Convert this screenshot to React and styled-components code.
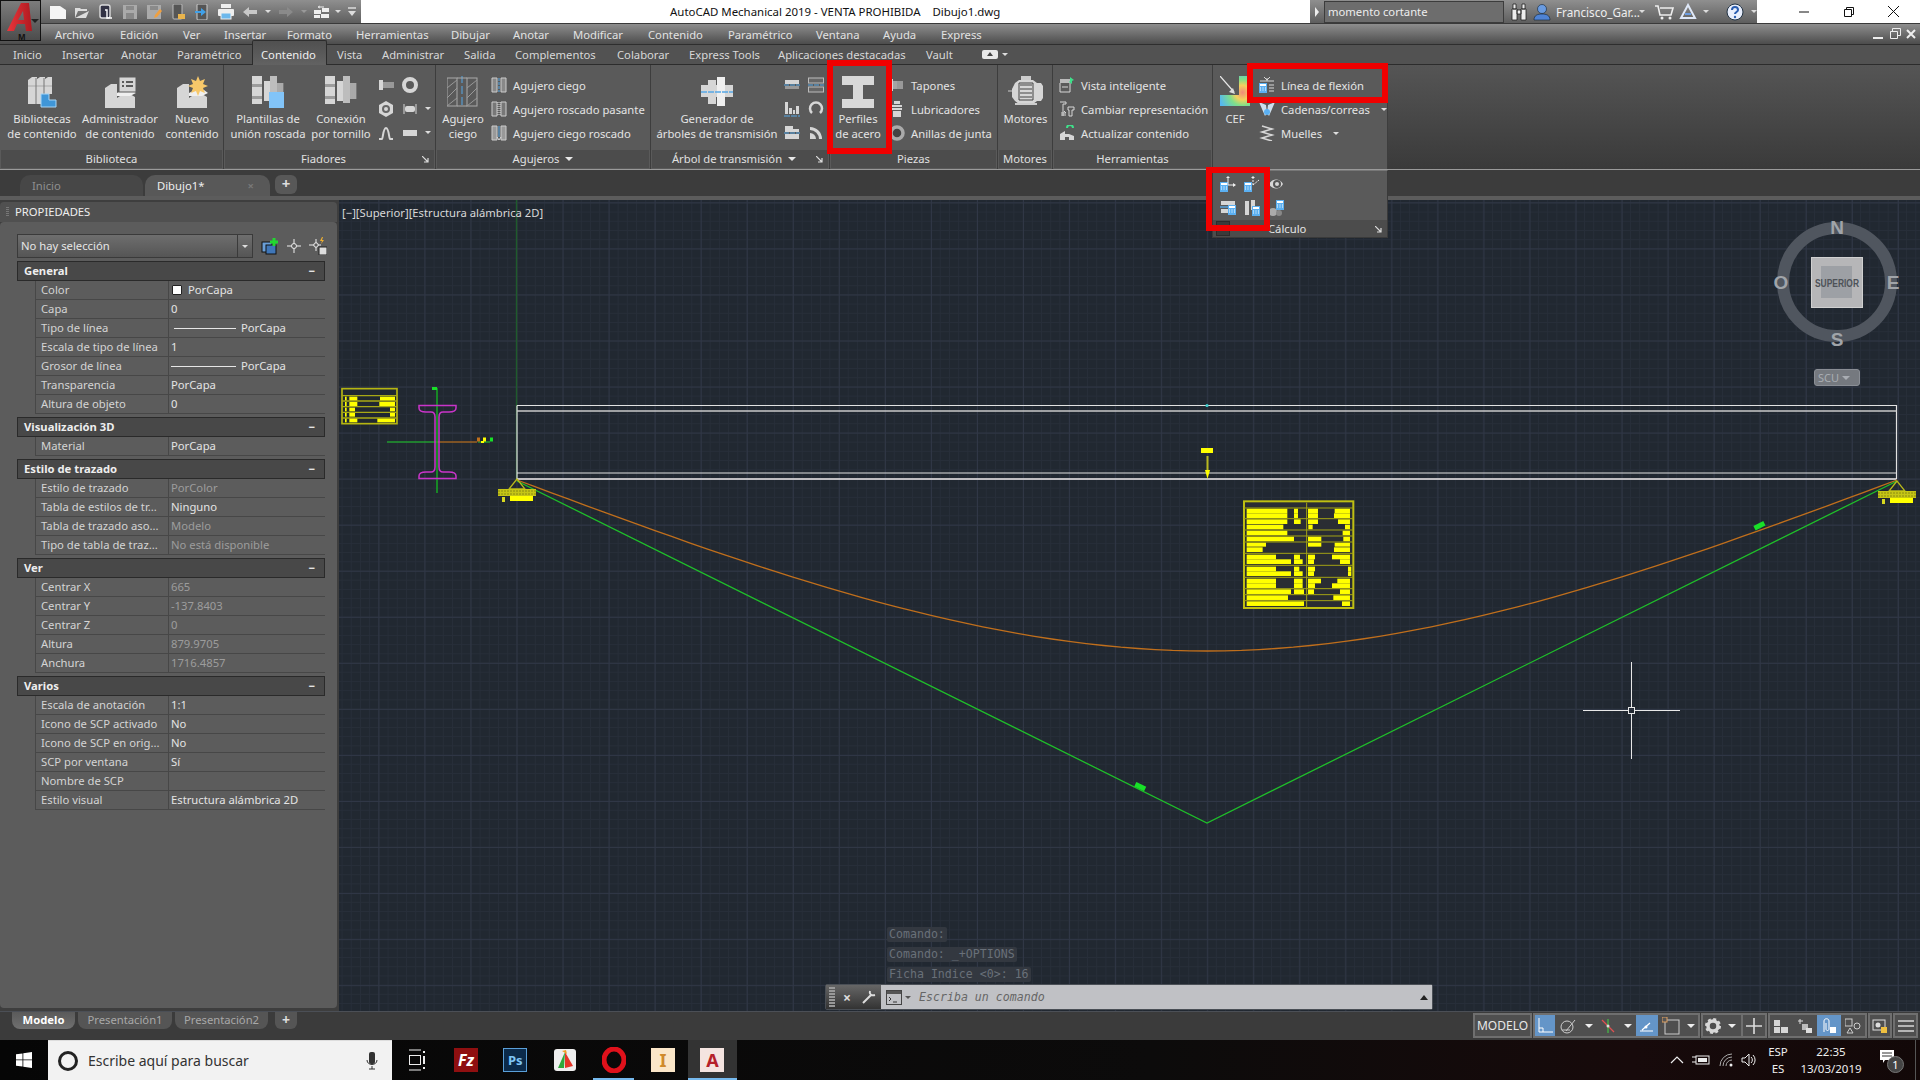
import React from 'react';
import styled, { createGlobalStyle } from 'styled-components';

const UI = '"Noto Sans", "Open Sans", sans-serif';
const MONO = '"DejaVu Sans Mono", "Liberation Mono", monospace';
const FS = '11.25px';

const Global = createGlobalStyle`
  html, body { margin: 0; padding: 0; background: #3b3b3b; }
  #root { width: 1920px; height: 1080px; }
  svg { display: block; flex-shrink: 0; }
  * { box-sizing: border-box; }
`;

const Root = styled.div`
  position: relative; width: 1920px; height: 1080px; overflow: hidden;
  display: flex; flex-direction: column; font-family: ${UI}; font-size: ${FS}; color: #dcdcdc; background: #3b3b3b;
`;

/* title bar */
const TitleBar = styled.div`display: flex; height: 24px; background: #fff; border-bottom: 1px solid #3a3a3a;`;
const Qat = styled.div`
  width: 361px; padding-left: 46px; display: flex; align-items: center; gap: 0;
  background: linear-gradient(#8f8f8f, #5e5e5e);
`;
const QatSlot = styled.div`width: ${p => p.$w || 24}px; display: flex; justify-content: center;`;
const TitleText = styled.div`
  padding-left: 309px; font-size: 11.45px; color: #111; line-height: 23px; white-space: pre;
`;
const RightTools = styled.div`
  margin-left: auto; width: 447px; display: flex; align-items: center; padding-left: 4px;
  background: linear-gradient(#8f8f8f, #5e5e5e);
`;
const SearchBox = styled.div`
  width: 180px; height: 22px; margin-left: 4px; background: #6d6d6d; border: 1px solid #3c3c3c; color: #eee;
  font-size: ${FS}; line-height: 20px; padding-left: 3px; margin-right: 6px;
`;
const ToolGap = styled.span`width: ${p => p.$w}px; flex-shrink: 0;`;
const UserName = styled.span`font-size: 11.7px; color: #eee; margin: 0 3px 0 5px; width: 80px; white-space: nowrap;`;
const Caret = styled.div`
  width: 0; height: 0; border-left: ${p => p.$s || 3}px solid transparent; border-right: ${p => p.$s || 3}px solid transparent;
  border-top: ${p => p.$s || 3}px solid ${p => p.$c || '#ddd'}; flex-shrink: 0; margin: ${p => p.$m || '0'};
`;
const WinControls = styled.div`width: 163px; display: flex; align-items: center; padding-left: 39px; gap: 29px;`;

/* app button overlay */
const AppButton = styled.div`
  position: absolute; left: 0; top: 0; width: 41px; height: 41px; z-index: 5;
  background: linear-gradient(#7c7c7c, #4c4c4c); border: 1px solid #111;
`;
const AppM = styled.span`position: absolute; left: 17px; top: 30px; font-size: 8px; font-weight: 700; color: #111;`;
const AppCaret = styled.div`position: absolute; left: 30px; top: 18px;`;
const LogoLayer = styled.div`position: absolute; left: 7px; top: 3px; z-index: 6;`;

/* menu */
const MenuBar = styled.div`
  display: flex; height: 21px; padding-left: 55px; align-items: center;
  background: linear-gradient(#8e8e8e, #4c4c4c); border-bottom: 1px solid #2e2e2e; position: relative;
`;
const MenuItem = styled.span`width: ${p => p.$w}px; font-size: ${FS}; color: #e2e2e2; white-space: nowrap;`;
const DocControls = styled.div`
  position: absolute; right: 4px; top: 4px; display: flex; gap: 5px; align-items: center;
`;

/* ribbon tabs */
const TabRow = styled.div`
  display: flex; height: 20px; padding-left: 13px; background: #525252; border-bottom: 1px solid #2c2c2c;
  isolation: isolate; align-items: center;
`;
const RibbonTab = styled.span`
  width: ${p => p.$w}px; font-size: ${FS}; color: ${p => (p.$active ? '#f0f0f0' : '#d8d8d8')}; white-space: nowrap; position: relative;
  ${p => p.$active && `
    &::before { content: ''; position: absolute; left: -9px; width: 73px; top: -7px; bottom: -3px; z-index: -1;
      background: linear-gradient(#505050, #626262); border: 1px solid #2c2c2c; border-bottom: none; border-radius: 2px 2px 0 0; }
  `}
`;
const TabPill = styled.span`
  width: 16px; height: 9px; border-radius: 2px; background: #e8e8e8; position: relative; margin-right: 4px;
  &::after { content: ''; position: absolute; left: 5px; top: 2px; border-left: 3px solid transparent; border-right: 3px solid transparent; border-bottom: 4px solid #444; }
`;

/* ribbon */
const Ribbon = styled.div`
  display: flex; height: 105px; background: linear-gradient(#555, #3a3a3a); border-bottom: 1px solid #9a9a9a; position: relative;
`;
const Panel = styled.div`
  width: ${p => p.$w}px; flex-shrink: 0; display: flex; flex-direction: column; background: #5a5a5a;
  border-right: 1px solid #3d3d3d; position: relative;
`;
const PanelBody = styled.div`flex: 1; display: flex; min-height: 0; padding-left: ${p => p.$pl || 0}px;`;
const PanelLabel = styled.div`
  height: 18px; background: #4c4c4c; color: #e0e0e0; font-size: ${FS}; display: flex; align-items: center; justify-content: center;
  gap: 6px; line-height: 16px; position: relative; margin: 0 1px 1px; padding-right: ${p => p.$pr || 0}px;
`;
const Launcher = styled.span`position: absolute; right: 5px; top: 6px;`;
const LargeBtn = styled.div`
  width: ${p => p.$w}px; flex-shrink: 0; display: flex; flex-direction: column; align-items: center; padding-top: 11px;
`;
const LargeText = styled.div`
  font-size: ${FS}; line-height: 15px; text-align: center; white-space: nowrap; margin-top: 3px; color: #e4e4e4;
`;
const SmallGrid = styled.div`
  display: grid; grid-template-columns: repeat(2, 24px); grid-auto-rows: 24px; padding-top: 8px; margin-left: ${p => p.$ml || 0}px;
  place-items: center; align-content: start;
`;
const SmallCell = styled.div`display: flex; align-items: center; position: relative;`;
const CellCaret = styled.div`position: absolute; left: 23px; top: 6px;`;
const SmallList = styled.div`display: flex; flex-direction: column; padding-top: 8px; padding-left: ${p => p.$pl || 0}px;`;
const SmallRow = styled.div`
  height: 24px; display: flex; align-items: center; gap: 6px; white-space: nowrap; font-size: ${FS}; color: #e4e4e4;
`;
const Flyout = styled.div`
  position: absolute; left: -1px; right: -1px; top: 105px; height: 68px; z-index: 3;
  background: #5a5a5a; border: 1px solid #3a3a3a; border-top: 1px solid #777; display: flex; flex-direction: column;
`;
const FlyoutRows = styled.div`flex: 1; display: grid; grid-template-columns: repeat(3, 24px); grid-auto-rows: 24px; padding: 1px 0 0 2px; place-items: center; align-content: start; margin-left: 1px;`;
const FlyoutLabel = styled.div`
  height: 18px; background: #4c4c4c; position: relative; padding-left: 55px; font-size: ${FS}; line-height: 17px; color: #e4e4e4;
`;
const PinBtn = styled.span`position: absolute; left: 3px; top: 1px; width: 14px; height: 15px; border: 1px solid #2c2c2c; background: #3a3a3a;`;
const RedBox = styled.div`
  position: absolute; z-index: 8; left: ${p => p.$x}px; top: ${p => p.$y}px; width: ${p => p.$w}px; height: ${p => p.$h}px;
  border: 6px solid #f00000;
`;

/* file tabs */
const FileTabs = styled.div`
  height: 30px; display: flex; align-items: flex-start; padding: 5px 0 0 20px; background: #3c3c3c; border-bottom: 4px solid #5c5c5c; gap: 2px;
`;
const FileTab = styled.div`
  width: ${p => p.$w}px; height: 21px; border-radius: 10px 10px 0 0; font-size: ${FS}; line-height: 21px; display: flex; justify-content: space-between;
  padding: 0 12px 0 12px; color: ${p => (p.$active ? '#eee' : '#8f8f8f')}; background: ${p => (p.$active ? '#585858' : '#474747')};
`;
const FileClose = styled.span`color: #777; font-weight: 700; margin-right: 4px;`;
const PlusTab = styled.div`
  width: 22px; height: 19px; margin-left: ${p => p.$ml || 3}px; border-radius: 6px; background: #585858; color: #ddd; text-align: center; font-size: 15px; line-height: 17px; font-weight: 700;
`;

/* main */
const Main = styled.div`flex: 1; display: flex; min-height: 0;`;
const Side = styled.div`width: 339px; flex-shrink: 0; padding: 2px 2px 3px 0; background: #3e3e3e; display: flex; flex-direction: column;`;
const SideHeader = styled.div`
  height: 20px; background: #505050; border-radius: 4px 4px 0 0; padding-left: 15px; font-size: ${FS}; line-height: 19px; color: #eee; position: relative;
  &::before { content: ''; position: absolute; left: 6px; top: 5px; width: 3px; height: 10px; background: repeating-linear-gradient(#777 0 1px, transparent 1px 2px); }
`;
const SideBody = styled.div`flex: 1; background: #5c5c5c; border-radius: 4px; padding: 12px 12px 0 17px;`;
const SelectRow = styled.div`display: flex; align-items: center; margin-bottom: 3px; height: 24px;`;
const Select = styled.div`
  width: 236px; height: 24px; border: 1px solid #3a3a3a; background: linear-gradient(#6e6e6e, #555); padding-left: 3px;
  font-size: ${FS}; line-height: 21px; color: #e6e6e6; position: relative; flex-shrink: 0;
  &::after { content: ''; position: absolute; right: 0; top: 0; bottom: 0; width: 14px; border-left: 1px solid #3a3a3a; }
`;
const SelectCaret = styled.span`position: absolute; right: 4px; top: 10px; z-index: 1;`;
const SelectIcons = styled.div`display: flex; align-items: center; gap: 7px; margin-left: 8px;`;
const Section = styled.div`margin-bottom: 3px;`;
const SectionHead = styled.div`
  height: 20px; background: #484848; border: 1px solid #2a2a2a; display: flex; justify-content: space-between; padding: 0 9px 0 6px;
  font-weight: 700; font-size: ${FS}; line-height: 18px; color: #eee;
`;
const Row = styled.div`
  margin-left: 18px; height: 19px; display: grid; grid-template-columns: 132px 1fr; border-bottom: 1px solid #474747; border-left: 1px solid #474747;
  white-space: nowrap; line-height: 18px;
`;
const RowLabel = styled.span`padding-left: 5px; color: #d4d4d4; font-size: ${FS}; overflow: hidden;`;
const RowValue = styled.span`
  padding-left: 2px; border-left: 1px solid #474747; display: flex; align-items: center; gap: ${p => p.$gap || 0}px;
  color: ${p => (p.$dim ? '#9c9c9c' : '#e4e4e4')}; font-size: ${FS};
`;
const Swatch = styled.span`width: 10px; height: 10px; background: #fff; border: 1px solid #222; margin-left: 1px; border-radius: 1px;`;
const LineSample = styled.span`width: ${p => p.$w}px; margin-left: ${p => p.$ml}px; height: 1px; background: #e6e6e6;`;

/* canvas */
const Canvas = styled.div`
  flex: 1; position: relative; overflow: hidden; background-color: #212831;
  background-image:
    linear-gradient(90deg, #303746 1px, transparent 1px),
    linear-gradient(#303746 1px, transparent 1px),
    linear-gradient(90deg, #272e39 1px, transparent 1px),
    linear-gradient(#272e39 1px, transparent 1px);
  background-size: 46.05px 46.05px, 46.05px 46.05px, 9.21px 9.21px, 9.21px 9.21px;
  background-position: 39.4px 0, 0 2.4px, 39.4px 0, 0 2.4px;
`;
const Drawing = styled.svg`position: absolute; left: 0; top: 0;`;
const ViewLabel = styled.div`position: absolute; left: 3px; top: 5px; font-size: ${FS}; color: #d8d8d8; white-space: nowrap;`;
const CubeWrap = styled.div`position: absolute; left: 1434px; top: 12px;`;
const ScuTag = styled.div`
  position: absolute; left: 1475px; top: 169px; width: 46px; height: 17px; background: #75797f; border-radius: 3px; border: 1px solid #8a8e95; color: #a9adb3;
  font-size: 11px; line-height: 14px; padding-left: 3px; display: flex; align-items: center; gap: 3px;
`;
const History = styled.div`position: absolute; left: 548px; top: 727px; display: flex; flex-direction: column; gap: 5px; align-items: flex-start;`;
const HistoryLine = styled.div`
  background: #333840; border-radius: 2px; padding: 0 2px; height: 15px; line-height: 15px; font-family: ${MONO}; font-size: 11.6px; color: #697079; white-space: pre;
`;
const CmdBar = styled.div`
  position: absolute; left: 486px; top: 784px; width: 608px; height: 26px; display: flex; border: 1px solid #4a4f56; border-radius: 2px;
`;
const CmdHandle = styled.div`
  width: 55px; background: linear-gradient(#666, #333); display: flex; align-items: center; gap: 8px; padding-left: 3px;
`;
const CmdGrip = styled.span`width: 6px; height: 20px; background: repeating-linear-gradient(#999 0 2px, transparent 2px 3px);`;
const CmdX = styled.span`color: #ddd; font-weight: 700; font-size: 14px; width: 11px;`;
const CmdInput = styled.div`
  flex: 1; background: #c0c1c5; display: flex; align-items: center; padding-left: 5px; position: relative;
`;
const CmdText = styled.span`font-family: ${MONO}; font-style: italic; font-size: 11.6px; color: #666; margin-left: 8px;`;
const CmdUp = styled.span`
  position: absolute; right: 4px; top: 10px; border-left: 4px solid transparent; border-right: 4px solid transparent; border-bottom: 5px solid #222;
`;

/* layout tabs + status */
const LayoutBar = styled.div`height: 29px; display: flex; background: #3b3b3b; border-top: 1px solid #4b4f56; padding-left: 12px;`;
const LayoutTab = styled.div`
  width: ${p => p.$w}px; height: 17px; margin-right: 3px; text-align: center; border-radius: 0 0 8px 8px; line-height: 15px; font-size: ${FS};
  color: ${p => (p.$active ? '#fff' : '#a8a8a8')}; font-weight: ${p => (p.$active ? 700 : 400)};
  background: ${p => (p.$active ? 'linear-gradient(#5a5a5a, #707070)' : '#555')};
`;
const LayoutPlus = styled.div`
  width: 22px; height: 17px; margin-left: 4px; border-radius: 0 0 6px 6px; background: #555; color: #ddd; text-align: center; font-weight: 700; font-size: 14px; line-height: 16px;
`;
const Status = styled.div`margin-left: auto; display: flex; gap: 1px; height: 25px; margin-top: 1px; margin-right: 2px;`;
const StatusGroup = styled.div`
  display: flex; align-items: center; background: #4f4f4f; border: 2px solid #6f6f6f; width: ${p => p.$w}px; flex-shrink: 0;
`;
const StatusCell = styled.div`
  width: ${p => p.$w}px; height: 100%; display: flex; align-items: center; justify-content: center; flex-shrink: 0; background: ${p => (p.$on ? '#6495c8' : 'transparent')};
  color: #e8e8e8; font-size: 12px; border-right: ${p => (p.$sep ? '2px solid #6f6f6f' : 'none')};
`;

/* taskbar */
const Taskbar = styled.div`
  height: 40px; display: flex; background: linear-gradient(90deg, #060606 0, #0c0b0b 60%, #170a0b 85%, #120808 100%); flex-shrink: 0;
`;
const StartBtn = styled.div`width: 48px; display: flex; align-items: center; justify-content: center;`;
const TaskSearch = styled.div`
  width: 344px; background: #f2f2f2; display: flex; align-items: center; padding-left: 10px; color: #333; font-size: 14px; gap: 10px; border-top: 1px solid #ddd;
`;
const CortanaRing = styled.span`width: 20px; height: 20px; border-radius: 50%; border: 3px solid #222; background: #f2f2f2;`;
const SearchText = styled.span`flex: 1; white-space: nowrap;`;
const MicWrap = styled.span`margin-right: 14px;`;
const TaskSlot = styled.div`
  width: 49.3px; display: flex; align-items: center; justify-content: center; position: relative;
  background: ${p => (p.$active ? '#333' : 'transparent')};
  ${p => p.$running && `&::after { content: ''; position: absolute; left: ${p.$active ? 0 : 4}px; right: ${p.$active ? 0 : 4}px; bottom: 0; height: 2px; background: #76b9ed; }`}
`;
const Tile = styled.div`
  width: ${p => p.$w || 24}px; height: 24px; display: flex; align-items: center; justify-content: center; background: ${p => p.$bg};
  border: ${p => p.$bd || 'none'}; color: ${p => p.$c}; font: ${p => p.$f || `italic 700 16px/20px ${UI}`};
`;
const Tray = styled.div`margin-left: auto; display: flex; align-items: center; color: #eee; font-size: 11.5px;`;
const TrayIcons = styled.div`display: flex; align-items: center; gap: 8.5px; margin-right: 9px;`;
const TrayLang = styled.div`text-align: center; line-height: 17px; margin-right: 10px; width: 24px;`;
const TrayClock = styled.div`text-align: center; line-height: 17px; width: 62px; margin-right: 17px;`;
const TrayNote = styled.div`position: relative; margin-right: 12px; width: 24px; height: 24px;`;
const NoteBadge = styled.span`
  position: absolute; left: 8px; top: 8px; width: 17px; height: 17px; border-radius: 50%; background: #444; border: 1px solid #777; font-size: 11px; text-align: center; line-height: 15px; color: #fff;
`;
const TrayEdge = styled.div`width: 1px; height: 40px; background: #555; margin-right: 4px;`;

/* ---------- drawings ---------- */
const G = '#d6d6d6';
const Svg = ({ s = 16, w, h, children }) => (
  <svg width={w || s} height={h || s} viewBox={`0 0 ${w || s} ${h || s}`}>{children}</svg>
);
const Bolt = ({ blue }) => (
  <Svg w={34} h={32}>
    <rect x="1" y="0" width="10" height="28" fill={G} />
    <rect x="1" y="8" width="10" height="3" fill="#9c9c9c" /><rect x="1" y="20" width="10" height="3" fill="#9c9c9c" />
    <rect x="13" y="5" width="6" height="20" fill={G} />
    <rect x="19" y="0" width="7" height="27" fill={G} opacity=".8" />
    <rect x="26" y="7" width="7" height="16" fill="#777" />
    <path d="M27 7v16M29 7v16M31 7v16" stroke="#ddd" />
    {blue && <rect x="18" y="16" width="15" height="16" fill="#82c4f8" />}
  </Svg>
);
const Books = () => (
  <Svg s={32}>
    <path d="M2 4l4-3h5v27H2z M11 3l3-2h5v27h-8z M19 3l3-2h4v17h-7v10h0z" fill={G} />
    <path d="M2 10h24" stroke="#a8a8a8" /><path d="M10 2v26M18 2v26" stroke="#777" />
    <path d="M15 18h8v6h7v7H15z" fill="#3f96d8" stroke="#a7d4f5" />
  </Svg>
);
const Block = () => <path d="M1 12l6-4h6v14l6-4h7l5 3v13H1z" fill={G} />;
const AdminIc = () => (
  <Svg s={32}>
    <Block />
    <path d="M13 17l6-3h9l4 3-6 3H13z" fill="#efefef" />
    <rect x="15" y="1" width="17" height="15" fill={G} stroke="#5a5a5a" />
    <path d="M18 6h2M22 6h7M18 10h2M22 10h7" stroke="#333" strokeWidth="1.5" />
  </Svg>
);
const NewIc = () => (
  <Svg s={32}>
    <Block />
    <path d="M13 17l6-3h9l4 3-6 3H13z" fill="#efefef" />
    <path d="M22 0l2 5 5-2-2 5 5 2-5 2 2 5-5-2-2 5-2-5-5 2 2-5-5-2 5-2-2-5 5 2z" fill="#f7c86a" />
  </Svg>
);
const Hole = () => (
  <Svg s={32}>
    <rect x="0" y="2" width="10" height="28" fill="#5a5a5a" stroke="#aaa" />
    <rect x="20" y="2" width="10" height="28" fill="#5a5a5a" stroke="#aaa" />
    <path d="M0 12L10 4M0 22L10 12M0 30L10 22M20 12L30 4M20 22L30 12M20 30L30 22" stroke="#999" />
    <path d="M15 -1v34" stroke="#57a8e6" strokeDasharray="8 3" />
    <path d="M10 2h10M10 30h10" stroke="#aaa" />
  </Svg>
);
const Shaft = () => (
  <Svg s={32}>
    <rect x="0" y="9" width="32" height="12" fill={G} />
    <rect x="7" y="4" width="8" height="24" fill={G} />
    <rect x="16" y="1" width="8" height="29" fill="#efefef" />
    <path d="M0 16h32" stroke="#57a8e6" strokeWidth="1.5" strokeDasharray="6 1" />
  </Svg>
);
const IBeam = () => (
  <Svg w={34} h={32}>
    <path d="M1 0h32v9H22v14h11v9H1v-9h11V9H1z" fill="#d8d8d8" />
  </Svg>
);
const Motor = () => (
  <Svg w={36} h={32}>
    <path d="M0 15h4" stroke="#ccc" />
    <rect x="13" y="0" width="10" height="4" fill="#ccc" />
    <path d="M7 7l4-3h14l4 3h4l2 3v12l-2 3h-4l-4 3H11l-4-3-3-4v-8z" fill={G} />
    <path d="M12 9h12M12 13h12M12 17h12M12 21h12M11 7v17h14V7z" stroke="#444" fill="none" />
    <path d="M7 28h22" stroke="#ccc" strokeWidth="2" />
  </Svg>
);
const Cef = () => (
  <Svg w={30} h={32}>
    <defs>
      <radialGradient id="cefg" cx="0.75" cy="0.55" r="0.8">
        <stop offset="0" stopColor="#f08a7a" /><stop offset=".3" stopColor="#f4d05e" /><stop offset=".55" stopColor="#7fdf8a" /><stop offset="1" stopColor="#55b8f0" />
      </radialGradient>
    </defs>
    <path d="M19 0h11v30H0V19h19z" fill="url(#cefg)" />
    <path d="M0 0l14 16" stroke="#e8e8e8" strokeWidth="1.2" /><path d="M15 18l-6-2 4-4z" fill="#ddd" />
  </Svg>
);
const Calc = ({ x = 0, y = 0 }) => (
  <g transform={`translate(${x},${y})`}>
    <rect width="8" height="10" fill="#5bb0f2" /><rect x="1" y="1" width="6" height="2" fill="#fff" />
    <path d="M1 5h1M3.5 5h1M6 5h1M1 7h1M3.5 7h1M6 7h1" stroke="#fff" />
  </g>
);
const Ic = {
  bar: <Svg><rect x="1" y="3" width="14" height="4" fill={G} /><rect x="1" y="9" width="14" height="3" fill="#999" /><path d="M0 8h16" stroke="#57a8e6" strokeDasharray="5 1" /></Svg>,
  hatch: <Svg><rect x=".5" y="1" width="15" height="5" fill="#666" stroke="#bbb" /><rect x=".5" y="10" width="15" height="5" fill="#666" stroke="#bbb" /><path d="M0 8h16" stroke="#57a8e6" strokeDasharray="5 1" /></Svg>,
  chart: <Svg><path d="M1 1h3v12H1zM5 7h3v6H5zM9 9h2v4H9zM12 5h3v8h-3z" fill={G} /><path d="M0 15h16" stroke="#57a8e6" strokeWidth="1.2" strokeDasharray="6 1" /></Svg>,
  ring: <Svg><path d="M4 12a6 6 0 1 1 8 0" fill="none" stroke={G} strokeWidth="2.5" /></Svg>,
  stair: <Svg><path d="M1 1h8v3h6v3H1zM1 9h14v5H1z" fill={G} /><path d="M0 8h16" stroke="#57a8e6" strokeDasharray="5 1" /></Svg>,
  seal: <Svg><path d="M2 2a12 12 0 0 1 12 12h-3a9 9 0 0 0-9-9zM2 8a6 6 0 0 1 6 6H2z" fill={G} /></Svg>,
  screw: <Svg><rect x="1" y="3" width="4" height="10" fill={G} /><rect x="5" y="5" width="3" height="6" fill="#999" /><path d="M9 5v6M11 5v6M13 5v6M15 5v6" stroke={G} /></Svg>,
  washer: <Svg><circle cx="8" cy="8" r="6" fill="none" stroke={G} strokeWidth="4" /></Svg>,
  nut: <Svg><path d="M8 0l7 4v8l-7 4-7-4V4z" fill={G} /><circle cx="8" cy="8" r="3" fill="none" stroke="#666" strokeWidth="2" /></Svg>,
  rod: <Svg><rect x="3" y="5" width="10" height="6" fill={G} rx="2" /><path d="M2 3v10M14 3v10" stroke={G} /></Svg>,
  spring: <Svg><path d="M1 14h3c1 0 1-11 4-11s3 11 4 11h3" stroke={G} strokeWidth="2" fill="none" /></Svg>,
  flat: <Svg><rect x="1" y="5" width="14" height="6" fill={G} /></Svg>,
  holeA: <Svg><path d="M1 1h5v14H1zM10 1h5v14h-5z" fill="#888" stroke="#ccc" /><path d="M8 1v14" stroke="#57a8e6" strokeDasharray="3 1" /></Svg>,
  holeB: <Svg><path d="M1 1h5v14H1zM10 1h5v14h-5z" fill="#777" stroke="#ccc" /><path d="M7 1v14M9 1v14" stroke="#ddd" strokeDasharray="1 1" /></Svg>,
  holeC: <Svg><path d="M1 1h5v14H1zM10 1h5v14h-5z" fill="#999" stroke="#ccc" /><path d="M8 1v11" stroke="#57a8e6" /><path d="M6 12l2 3 2-3" fill="none" stroke="#ddd" /></Svg>,
  plug: <Svg><rect x="0" y="2" width="4" height="12" fill={G} /><rect x="4" y="4" width="4" height="8" fill={G} opacity=".6" /><path d="M9 4v8M11 4v8M13 4v8" stroke={G} /></Svg>,
  grease: <Svg><path d="M5 0h6v3H5zM3 4h10v2H3zM3 7h10v2H3zM4 10h8v6H4z" fill={G} /></Svg>,
  gasket: <Svg><circle cx="8" cy="8" r="6" fill="#444" stroke="#aaa" strokeWidth="3.5" /></Svg>,
  smart: <Svg><rect x="1" y="2" width="10" height="4" fill="#bbb" /><path d="M1 6v9M11 6v9M1 15h10M3 10h6" stroke={G} fill="none" /><path d="M11 0l4 3-2 1v3l-3-2 1-1z" fill="#3fe08a" /></Svg>,
  change: <Svg><path d="M1 1h6v2H4v12M9 6h6v3h-2v6h-3V9H9z" stroke={G} fill="none" /><path d="M2 12h5l-2-2M7 14H2" stroke={G} fill="none" /></Svg>,
  refresh: <Svg><path d="M1 15V9l5-3v3h4l5 2v4H10v-3H6v3z" fill={G} /><path d="M8 3a3 3 0 0 1 6 0" stroke="#3fe08a" strokeWidth="2" fill="none" /></Svg>,
  flex: <Svg><path d="M1 4h14M8 1v3M5 0l3 3 3-3" stroke={G} fill="none" /><Calc y="6" /><path d="M10 8h5M10 11h5M10 14h5" stroke={G} /></Svg>,
  chain: <Svg><path d="M0 1l7 3 1 8-2 3zM16 1l-7 3-1 8 2 3z" fill="#cfe0ee" /><circle cx="8" cy="11" r="3" fill="#5bb0f2" /></Svg>,
  coil: <Svg><path d="M3 1l10 3-10 3 10 3-10 3 10 3" stroke={G} strokeWidth="1.6" fill="none" /></Svg>,
  axisA: <Svg><Calc y="6" /><path d="M8 9V1M8 9h7" stroke="#eee" /><path d="M6 2l2-2 2 2M13 7l3 2-3 2" fill="#eee" /></Svg>,
  axisB: <Svg><Calc y="6" /><path d="M9 9V1M9 9l6-5" stroke="#eee" strokeDasharray="2 1" /><path d="M7 2l2-2 2 2" fill="#eee" /></Svg>,
  calcA: <Svg><rect x="1" y="1" width="14" height="4" fill={G} /><rect x="1" y="9" width="7" height="4" fill={G} /><path d="M0 7h9" stroke="#57a8e6" strokeWidth="1.4" /><Calc x="8" y="5" /></Svg>,
  calcB: <Svg><rect x="1" y="1" width="4" height="14" fill={G} /><rect x="7" y="0" width="4" height="10" fill={G} /><Calc x="8" y="6" /></Svg>,
  eye: <Svg><path d="M1 8c3-6 11-6 14 0-3 6-11 6-14 0z" fill={G} /><circle cx="9" cy="8" r="4" fill="#555" /><circle cx="9" cy="8" r="2" fill={G} /></Svg>,
  gears: <Svg><circle cx="5" cy="12" r="4" fill="#aaa" /><circle cx="11" cy="13" r="3" fill="#888" /><Calc x="8" y="0" /></Svg>,
};
const Launch = () => <Svg s={7}><path d="M0 0l6 6M6 2v4H2" stroke="#ddd" fill="none" strokeWidth="1.2" /></Svg>;
const PanelCaret = () => <Caret $s={4} $c="#e8e8e8" />;

const Qi = {
  page: <Svg><path d="M0 2h10l6 4v9H0z" fill="#f5f5f5" /></Svg>,
  open: <Svg><path d="M1 14V4h5l1 1h6v2H4l-3 7h11l3-7" fill="#ddd" /></Svg>,
  sheet: <Svg><rect x="2" y="1" width="10" height="13" rx="2" fill="#334" stroke="#ddd" strokeWidth="1.4" /><path d="M7 6h2v8h5" stroke="#fff" fill="none" strokeWidth="1.4" /></Svg>,
  save: <Svg><path d="M1 1h14v14H1z" fill="#aaa" /><rect x="4" y="2" width="8" height="4" fill="#8a8a8a" /><rect x="4" y="9" width="8" height="6" fill="#888" /></Svg>,
  saveAs: <Svg><path d="M1 1h14v14H1z" fill="#aaa" /><rect x="4" y="2" width="8" height="4" fill="#8a8a8a" /><path d="M8 14l1-3 5-6 2 2-5 6z" fill="#f0a040" /></Svg>,
  phone: <Svg><rect x="3" y="0" width="9" height="15" rx="1" fill="#555" stroke="#bbb" /><path d="M8 10h7v5H8z" fill="#e9b44c" /></Svg>,
  phone2: <Svg><rect x="3" y="0" width="10" height="16" rx="1" fill="#555" stroke="#ccc" /><path d="M1 7h6V4l5 4-5 4V9H1z" fill="#3fa0e8" /></Svg>,
  print: <Svg><rect x="3" y="0" width="10" height="4" fill="#eee" /><rect x="0" y="5" width="16" height="7" fill="#eee" rx="1" /><rect x="3" y="9" width="10" height="6" fill="#6db8ec" stroke="#eee" /></Svg>,
  undo: <Svg><path d="M1 8l6-5v3h8v4H7v3z" fill="#c8c8c8" /></Svg>,
  redo: <Svg><path d="M15 8L9 3v3H1v4h8v3z" fill="#8a8a8a" /></Svg>,
  ws: <Svg><rect x="0" y="6" width="7" height="4" fill="#eee" /><rect x="7" y="10" width="8" height="4" fill="#eee" /><rect x="0" y="11" width="6" height="3" fill="#eee" /><rect x="8" y="4" width="7" height="4" fill="#eee" /><path d="M6 3h4M6 2l-2 1 2 1" stroke="#eee" fill="none" /></Svg>,
  more: <Svg w={10} h={12}><path d="M1 2h8" stroke="#ddd" strokeWidth="1.5" /><path d="M1 5h8L5 10z" fill="#ddd" /></Svg>,
};

const AppLogo = () => (
  <Svg w={26} h={28}>
    <defs><linearGradient id="apa" x1="0" x2="1"><stop offset="0" stopColor="#ea363c" /><stop offset="1" stopColor="#b01a20" /></linearGradient></defs>
    <path d="M0 28L14 0h8l3 28h-6l-1-7h-8l-3 7zM11 17h6l-1-9z" fill="url(#apa)" fillRule="evenodd" />
  </Svg>
);

/* the CAD drawing, in screen coordinates */
const deflect = () => {
  const pts = [];
  for (let i = 0; i <= 80; i++) {
    const t = i / 80;
    const x = 517 + t * 1380;
    const xi = t <= 0.5 ? t : 1 - t;
    pts.push(`${x.toFixed(1)},${(480 + 171 * xi * (3 - 4 * xi * xi)).toFixed(1)}`);
  }
  return pts.join(' ');
};
const BIG_ROWS = [
  [236, 14, [[200, 322], [342, 354], [384, 414], [464, 510]]],
  [250, 14, [[200, 322], [342, 354], [384, 414], [462, 510]]],
  [268, 14, [[200, 322], [342, 362], [384, 414], [474, 510]]],
  [284, 14, [[200, 310], [385, 398], [495, 510]]],
  [302, 14, [[200, 322], [488, 510]]],
  [320, 14, [[200, 342], [384, 424], [490, 510]]],
  [338, 12, [[200, 258], [384, 424], [464, 510]]],
  [352, 14, [[200, 248], [462, 510]]],
  [374, 14, [[200, 288], [342, 360], [384, 405], [456, 510]]],
  [388, 14, [[200, 333], [342, 368], [384, 402], [480, 510]]],
  [410, 14, [[200, 288], [342, 358], [384, 405], [504, 514]]],
  [424, 14, [[200, 333], [342, 368], [384, 402], [504, 514]]],
  [446, 14, [[200, 288], [342, 368], [384, 423], [472, 510]]],
  [460, 14, [[200, 288], [342, 368], [384, 405], [456, 510]]],
  [478, 14, [[200, 333], [342, 372], [384, 402], [480, 510]]],
  [496, 14, [[200, 324], [460, 510]]],
  [514, 14, [[200, 372], [486, 510]]],
];
const SMALL_ROWS = [
  [80, 11, [[45, 50], [58, 82], [150, 195]]],
  [96, 12, [[45, 50], [58, 82], [148, 195]]],
  [113, 11, [[45, 50], [58, 75], [180, 195]]],
  [129, 11, [[45, 50], [58, 75], [180, 195]]],
  [146, 11, [[45, 50], [58, 82], [142, 195]]],
];
const Support = ({ x, y }) => (
  <g>
    <path d={`M${x} ${y}l-8 10h16z`} fill="none" stroke="#b9b91a" strokeWidth="1.3" />
    <rect x={x - 19} y={y + 10} width="38" height="7" fill="#c5c516" />
    <path d={`M${x - 19} ${y + 12}h38M${x - 19} ${y + 15}h38`} stroke="#8c8c10" strokeDasharray="2 1" />
    <rect x={x - 7} y={y + 17} width="23" height="5" fill="#ffff00" />
    <rect x={x - 15} y={y + 18} width="3" height="5" fill="#d8d820" />
  </g>
);
const Drawn = () => (
  <Drawing width="1581" height="811" viewBox="339 200 1581 811">
    <path d="M516.5 200V480" stroke="#1f5b2c" strokeWidth="1.4" />
    {/* beam */}
    <path d="M517 405.5H1896.5V479M517 411H1896.5M517 473H1896.5M517 405.5V479" stroke="#e2e2e2" fill="none" strokeWidth="1.2" />
    <path d="M517 479H1896.5" stroke="#f2eeee" strokeWidth="1.6" />
    <path d="M517 411H1896.5" stroke="#bdbdbd" strokeWidth="1.2" />
    <circle cx="1207" cy="405.5" r="1.6" fill="#3fd0d0" />
    {/* load */}
    <rect x="1201" y="448" width="12" height="5" fill="#ffff00" />
    <path d="M1207.5 456V474" stroke="#b8b820" strokeWidth="2" />
    <path d="M1205 470h5l-2.500 9z" fill="#ffff00" />
    {/* curves */}
    <polyline points={deflect()} fill="none" stroke="#c06f1c" strokeWidth="1.3" />
    <path d="M517 481L1207 823L1897 481" fill="none" stroke="#1fbf2a" strokeWidth="1.3" />
    <rect x="1135" y="784" width="11" height="5" fill="#18e028" transform="rotate(26 1140 786)" />
    <rect x="1754" y="523.500" width="11" height="5" fill="#18e028" transform="rotate(-26 1759 526)" />
    <Support x={517} y={479} />
    <Support x={1897} y={481} />
    {/* section */}
    <path d="M387 442H437M478 442H490" stroke="#1fd02a" strokeWidth="1.2" />
    <path d="M437 442H477" stroke="#d57a16" strokeWidth="1.2" />
    <path d="M437 388V493" stroke="#16a823" strokeWidth="1.5" />
    <rect x="432" y="387" width="5" height="3" fill="#18e028" />
    <path d="M419 405.500h37v2.500c0 3-2 4-7 4h-6c-3 0-4 2-4 5v50c0 3 1 5 4 5h6c5 0 7 1 7 4v2.500h-37v-2.500c0-3 2-4 7-4h5c3 0 4-2 4-5v-50c0-3-1-5-4-5h-5c-5 0-7-1-7-4z" fill="none" stroke="#c934c9" strokeWidth="1.5" />
    <rect x="477" y="437.500" width="3" height="4" fill="#c06f1c" />
    <rect x="483" y="437.500" width="3" height="4" fill="#ffff00" />
    <rect x="490" y="437.500" width="3" height="4" fill="#18e028" />
    <rect x="481" y="441" width="3" height="2" fill="#ffff00" />
    {/* small table */}
    <g transform="translate(330,370) scale(.3333)">
      <rect x="36" y="56" width="165" height="105" fill="#212831" stroke="#b5b512" strokeWidth="5" />
      <path d="M36 77h165M36 93h165M36 110h165M36 127h165M36 144h165" stroke="#a8a815" strokeWidth="4" />
      {SMALL_ROWS.map(([y, h, segs]) => segs.map(([a, b]) => <rect key={y + '-' + a} x={a} y={y} width={b - a} height={h} fill="#ffff00" />))}
    </g>
    {/* big table */}
    <g transform="translate(1180,430) scale(.3333)">
      <rect x="192" y="214" width="328" height="320" fill="#2a2d33" stroke="#bfbf12" strokeWidth="6" />
      {BIG_ROWS.map(([y, h, segs]) => segs.map(([a, b]) => <rect key={y + '-' + a} x={a} y={y} width={b - a} height={h} fill="#ffff00" />))}
      <path d="M192 234h328M192 266h328M192 300h328M192 318h328M192 336h328M192 370h328M192 406h328M192 442h328M192 476h328M192 494h328M192 512h328" stroke="#a3a315" strokeWidth="3" />
      <path d="M380 218V532" stroke="#a3a315" strokeWidth="3" />
    </g>
    {/* crosshair */}
    <path d="M1583 710.500H1628M1635 710.500H1680M1631.500 662V707M1631.500 714V759" stroke="#e8e8e8" />
    <rect x="1628.500" y="707.500" width="6" height="6" fill="none" stroke="#e8e8e8" />
  </Drawing>
);
const ViewCube = () => (
  <Svg w={130} h={142}>
    <circle cx="64" cy="70" r="54" fill="none" stroke="#50565f" strokeWidth="12" />
    <rect x="38.500" y="45.500" width="51" height="50" fill="#b6b6b8" stroke="#d0d0d0" />
    <rect x="48" y="54" width="31" height="32" fill="#9da0a5" />
    <text x="64" y="75" textAnchor="middle" fontFamily='"Liberation Sans", sans-serif' fontWeight="700" fontSize="10" fill="#4e5258" textLength="44" lengthAdjust="spacingAndGlyphs">SUPERIOR</text>
    <g fontFamily='"Liberation Sans", sans-serif' fontWeight="700" fontSize="19" fill="#a0a4a9" textAnchor="middle">
      <text x="64" y="22">N</text>
      <text x="64" y="134">S</text>
      <text x="8" y="77">O</text>
      <text x="120" y="77">E</text>
    </g>
  </Svg>
);

/* ---------- data ---------- */
const MENU = [['Archivo', 65], ['Edición', 63], ['Ver', 41], ['Insertar', 63], ['Formato', 69], ['Herramientas', 95], ['Dibujar', 62], ['Anotar', 60], ['Modificar', 75], ['Contenido', 80], ['Paramétrico', 88], ['Ventana', 67], ['Ayuda', 58], ['Express', 60]];
const TABS = [['Inicio', 49], ['Insertar', 59], ['Anotar', 56], ['Paramétrico', 84], ['Contenido', 76, true], ['Vista', 45], ['Administrar', 82], ['Salida', 51], ['Complementos', 102], ['Colaborar', 72], ['Express Tools', 89], ['Aplicaciones destacadas', 148], ['Vault', 56]];
const SECTIONS = [
  { title: 'General', rows: [
    { l: 'Color', v: 'PorCapa', swatch: true }, { l: 'Capa', v: '0' },
    { l: 'Tipo de línea', v: 'PorCapa', line: [62, 3] }, { l: 'Escala de tipo de línea', v: '1' },
    { l: 'Grosor de línea', v: 'PorCapa', line: [65, 0] }, { l: 'Transparencia', v: 'PorCapa' }, { l: 'Altura de objeto', v: '0' },
  ] },
  { title: 'Visualización 3D', rows: [{ l: 'Material', v: 'PorCapa' }] },
  { title: 'Estilo de trazado', rows: [
    { l: 'Estilo de trazado', v: 'PorColor', dim: true }, { l: 'Tabla de estilos de tr...', v: 'Ninguno' },
    { l: 'Tabla de trazado aso...', v: 'Modelo', dim: true }, { l: 'Tipo de tabla de traz...', v: 'No está disponible', dim: true },
  ] },
  { title: 'Ver', rows: [
    { l: 'Centrar X', v: '665', dim: true }, { l: 'Centrar Y', v: '-137.8403', dim: true }, { l: 'Centrar Z', v: '0', dim: true },
    { l: 'Altura', v: '879.9705', dim: true }, { l: 'Anchura', v: '1716.4857', dim: true },
  ] },
  { title: 'Varios', rows: [
    { l: 'Escala de anotación', v: '1:1' }, { l: 'Icono de SCP activado', v: 'No' }, { l: 'Icono de SCP en orig...', v: 'No' },
    { l: 'SCP por ventana', v: 'Sí' }, { l: 'Nombre de SCP', v: '' }, { l: 'Estilo visual', v: 'Estructura alámbrica 2D' },
  ] },
];
const Large = ({ w, icon, children }) => (
  <LargeBtn $w={w}>{icon}<LargeText>{children}</LargeText></LargeBtn>
);
const Small = ({ icon, children, caret }) => (
  <SmallRow>{icon}{children}{caret && <Caret $m="0 0 0 5px" />}</SmallRow>
);
const PropRow = ({ r }) => (
  <Row>
    <RowLabel>{r.l}</RowLabel>
    <RowValue $dim={r.dim} $gap={r.swatch ? 6 : r.line ? 5 : 0}>
      {r.swatch && <Swatch />}
      {r.line && <LineSample $w={r.line[0]} $ml={r.line[1]} />}
      {r.v}
    </RowValue>
  </Row>
);

export default function App() {
  return (
    <Root>
      <Global />
      <AppButton>
        <AppCaret><Caret $s={4} $c="#222" /></AppCaret>
        <AppM>M</AppM>
      </AppButton>
      <LogoLayer><AppLogo /></LogoLayer>
      <TitleBar>
        <Qat>
          <QatSlot>{Qi.page}</QatSlot><QatSlot>{Qi.open}</QatSlot><QatSlot>{Qi.sheet}</QatSlot><QatSlot>{Qi.save}</QatSlot>
          <QatSlot>{Qi.saveAs}</QatSlot><QatSlot>{Qi.phone}</QatSlot><QatSlot>{Qi.phone2}</QatSlot><QatSlot>{Qi.print}</QatSlot>
          <QatSlot>{Qi.undo}</QatSlot><QatSlot $w={12}><Caret /></QatSlot><QatSlot $w={24}>{Qi.redo}</QatSlot><QatSlot $w={12}><Caret $c="#999" /></QatSlot>
          <QatSlot $w={24}>{Qi.ws}</QatSlot><QatSlot $w={8}><Caret /></QatSlot><QatSlot $w={19}>{Qi.more}</QatSlot>
        </Qat>
        <TitleText>{'AutoCAD Mechanical 2019 - VENTA PROHIBIDA    Dibujo1.dwg'}</TitleText>
        <RightTools>
          <Svg w={6} h={12}><path d="M1 1l4 5-4 5z" fill="#eee" /></Svg>
          <SearchBox>momento cortante</SearchBox>
          <Svg w={18} h={18}><path d="M2 6h5v11H2zM11 6h5v11h-5zM3 1h3v5H3zM12 1h3v5h-3zM7 7h4v4H7z" fill="#eee" stroke="#222" strokeWidth=".8" /></Svg>
          <ToolGap $w={5} />
          <Svg w={18} h={18}><circle cx="9" cy="6" r="4.500" fill="#6a9be0" stroke="#123" strokeWidth=".6" /><path d="M1 17c0-5 4-6 8-6s8 1 8 6z" fill="#4f83d4" stroke="#123" strokeWidth=".6" /></Svg>
          <UserName>Francisco_Gar...</UserName>
          <Caret />
          <Svg w={34} h={18}><path d="M10 3h3l2 9h11l2-7H15" stroke="#eee" fill="none" strokeWidth="1.6" /><circle cx="17" cy="15" r="1.500" fill="#eee" /><circle cx="25" cy="15" r="1.500" fill="#eee" /></Svg>
          <Svg w={18} h={18}><path d="M9 2l7 13H2z" fill="none" stroke="#dfe8f8" strokeWidth="2" /><path d="M6 11h6" stroke="#6a9be0" strokeWidth="2" /></Svg>
          <Caret $m="0 17px 0 6px" />
          <Svg w={18} h={18}><circle cx="9" cy="9" r="8" fill="#e8eefc" stroke="#234" /><path d="M6 7c0-4 6-4 6 0 0 2-3 2-3 4" fill="none" stroke="#2a5db0" strokeWidth="2" /><circle cx="9" cy="14" r="1.200" fill="#2a5db0" /></Svg>
          <Caret $m="0 0 0 7px" />
        </RightTools>
        <WinControls>
          <Svg w={16} h={16}><path d="M3 8h10" stroke="#111" /></Svg>
          <Svg w={16} h={16}><path d="M3.500 5.500h7v7h-7zM5.500 5.500v-2h7v7h-2" stroke="#111" fill="none" /></Svg>
          <Svg w={16} h={16}><path d="M2 2l11 11M13 2L2 13" stroke="#111" /></Svg>
        </WinControls>
      </TitleBar>

      <MenuBar>
        {MENU.map(([t, w]) => <MenuItem key={t} $w={w}>{t}</MenuItem>)}
        <DocControls>
          <Svg w={12} h={12}><path d="M1 10h10" stroke="#eee" strokeWidth="2" /></Svg>
          <Svg w={12} h={12}><path d="M1.500 3.500h7v7h-7zM3.500 3V.500h8v7H9" stroke="#eee" fill="none" /></Svg>
          <Svg w={10} h={12}><path d="M1 2l8 8M9 2l-8 8" stroke="#eee" strokeWidth="2" /></Svg>
        </DocControls>
      </MenuBar>

      <TabRow>
        {TABS.map(([t, w, a]) => <RibbonTab key={t} $w={w} $active={a}>{t}</RibbonTab>)}
        <TabPill /><Caret />
      </TabRow>

      <Ribbon>
        <Panel $w={224}>
          <PanelBody>
            <Large w={84} icon={<Books />}>Bibliotecas<br />de contenido</Large>
            <Large w={72} icon={<AdminIc />}>Administrador<br />de contenido</Large>
            <Large w={72} icon={<NewIc />}>Nuevo<br />contenido</Large>
          </PanelBody>
          <PanelLabel>Biblioteca</PanelLabel>
        </Panel>
        <Panel $w={212}>
          <PanelBody>
            <Large w={88} icon={<Bolt blue />}>Plantillas de<br />unión roscada</Large>
            <Large w={58} icon={<Bolt />}>Conexión<br />por tornillo</Large>
            <SmallGrid $ml={4}>
              <SmallCell>{Ic.screw}</SmallCell><SmallCell>{Ic.washer}</SmallCell>
              <SmallCell>{Ic.nut}</SmallCell><SmallCell>{Ic.rod}<CellCaret><Caret /></CellCaret></SmallCell>
              <SmallCell>{Ic.spring}</SmallCell><SmallCell>{Ic.flat}<CellCaret><Caret /></CellCaret></SmallCell>
            </SmallGrid>
          </PanelBody>
          <PanelLabel $pr={12}>Fiadores<Launcher><Launch /></Launcher></PanelLabel>
        </Panel>
        <Panel $w={215}>
          <PanelBody>
            <Large w={54} icon={<Hole />}>Agujero<br />ciego</Large>
            <SmallList $pl={1}>
              <Small icon={Ic.holeA}>Agujero ciego</Small>
              <Small icon={Ic.holeB}>Agujero roscado pasante</Small>
              <Small icon={Ic.holeC}>Agujero ciego roscado</Small>
            </SmallList>
          </PanelBody>
          <PanelLabel>Agujeros <PanelCaret /></PanelLabel>
        </Panel>
        <Panel $w={179}>
          <PanelBody>
            <Large w={132} icon={<Shaft />}>Generador de<br />árboles de transmisión</Large>
            <SmallGrid $ml={-3}>
              <SmallCell>{Ic.bar}</SmallCell><SmallCell>{Ic.hatch}</SmallCell>
              <SmallCell>{Ic.chart}</SmallCell><SmallCell>{Ic.ring}</SmallCell>
              <SmallCell>{Ic.stair}</SmallCell><SmallCell>{Ic.seal}</SmallCell>
            </SmallGrid>
          </PanelBody>
          <PanelLabel $pr={12}>Árbol de transmisión <PanelCaret /><Launcher><Launch /></Launcher></PanelLabel>
        </Panel>
        <Panel $w={168}>
          <PanelBody>
            <Large w={56} icon={<IBeam />}>Perfiles<br />de acero</Large>
            <SmallList $pl={3}>
              <Small icon={Ic.plug}>Tapones</Small>
              <Small icon={Ic.grease}>Lubricadores</Small>
              <Small icon={Ic.gasket}>Anillas de junta</Small>
            </SmallList>
          </PanelBody>
          <PanelLabel>Piezas</PanelLabel>
        </Panel>
        <Panel $w={55}>
          <PanelBody>
            <Large w={55} icon={<Motor />}>Motores</Large>
          </PanelBody>
          <PanelLabel>Motores</PanelLabel>
        </Panel>
        <Panel $w={160}>
          <PanelBody $pl={6}>
            <SmallList>
              <Small icon={Ic.smart}>Vista inteligente</Small>
              <Small icon={Ic.change}>Cambiar representación</Small>
              <Small icon={Ic.refresh}>Actualizar contenido</Small>
            </SmallList>
          </PanelBody>
          <PanelLabel>Herramientas</PanelLabel>
        </Panel>
        <Panel $w={175}>
          <PanelBody>
            <Large w={44} icon={<Cef />}>CEF</Large>
            <SmallList $pl={2}>
              <Small icon={Ic.flex}>Línea de flexión</Small>
              <Small icon={Ic.chain} caret>Cadenas/correas</Small>
              <Small icon={Ic.coil} caret>Muelles</Small>
            </SmallList>
          </PanelBody>
          <Flyout>
            <FlyoutRows>
              {Ic.axisA}{Ic.axisB}{Ic.eye}{Ic.calcA}{Ic.calcB}{Ic.gears}
            </FlyoutRows>
            <FlyoutLabel><PinBtn />Cálculo<Launcher><Launch /></Launcher></FlyoutLabel>
          </Flyout>
        </Panel>
      </Ribbon>

      <FileTabs>
        <FileTab $w={123}>Inicio</FileTab>
        <FileTab $w={125} $active>Dibujo1*<FileClose>×</FileClose></FileTab>
        <PlusTab>+</PlusTab>
      </FileTabs>

      <Main>
        <Side>
          <SideHeader>PROPIEDADES</SideHeader>
          <SideBody>
            <SelectRow>
              <Select>No hay selección<SelectCaret><Caret /></SelectCaret></Select>
              <SelectIcons>
                <Svg w={18} h={18}><rect x="1" y="5" width="10" height="10" fill="#6a9fd8" stroke="#111" /><rect x="5" y="8" width="10" height="9" fill="#3f76b8" stroke="#111" /><path d="M13 1v8M9 5h8" stroke="#22d830" strokeWidth="3" /></Svg>
                <Svg w={16} h={16}><circle cx="8" cy="8" r="2.500" fill="none" stroke="#eee" /><path d="M8 1v4M8 11v4M1 8h4M11 8h4" stroke="#eee" /></Svg>
                <Svg w={18} h={18}><circle cx="7" cy="8" r="2.200" fill="none" stroke="#eee" /><path d="M7 2v4M7 10v4M0 8h5M9 8h3" stroke="#eee" /><rect x="10" y="10" width="8" height="8" fill="#ddd" stroke="#222" /><path d="M13 0l-2 4h2l-1 3 3-4h-2l1-3z" fill="#f0b030" /></Svg>
              </SelectIcons>
            </SelectRow>
            {SECTIONS.map(s => (
              <Section key={s.title}>
                <SectionHead><span>{s.title}</span><span>−</span></SectionHead>
                {s.rows.map(r => <PropRow key={r.l} r={r} />)}
              </Section>
            ))}
          </SideBody>
        </Side>
        <Canvas>
          <Drawn />
          <ViewLabel>[−][Superior][Estructura alámbrica 2D]</ViewLabel>
          <CubeWrap><ViewCube /></CubeWrap>
          <ScuTag>SCU <Caret $s={4} $c="#a9adb3" /></ScuTag>
          <History>
            <HistoryLine>Comando:</HistoryLine>
            <HistoryLine>Comando: _+OPTIONS</HistoryLine>
            <HistoryLine>{'Ficha Indice <0>: 16'}</HistoryLine>
          </History>
          <CmdBar>
            <CmdHandle>
              <CmdGrip /><CmdX>×</CmdX>
              <Svg w={14} h={14}><path d="M1 13L9 5M8 1c-1 3 1 5 5 4" stroke="#ddd" strokeWidth="2" fill="none" /></Svg>
            </CmdHandle>
            <CmdInput>
              <Svg w={16} h={15}><rect x=".5" y=".5" width="15" height="14" fill="#c0c1c5" stroke="#444" /><rect x="1" y="1" width="14" height="3" fill="#555" /><path d="M3 7l2 2-2 2M7 12h4" stroke="#333" fill="none" /></Svg>
              <Caret $m="0 0 0 3px" $c="#555" />
              <CmdText>Escriba un comando</CmdText>
              <CmdUp />
            </CmdInput>
          </CmdBar>
        </Canvas>
      </Main>

      <LayoutBar>
        <LayoutTab $w={63} $active>Modelo</LayoutTab>
        <LayoutTab $w={94}>Presentación1</LayoutTab>
        <LayoutTab $w={93}>Presentación2</LayoutTab>
        <LayoutPlus>+</LayoutPlus>
        <Status>
          <StatusGroup $w={59}><StatusCell $w={55}>MODELO</StatusCell></StatusGroup>
          <StatusGroup $w={167}>
            <StatusCell $w={20} $on><Svg><path d="M2 0v14h14M2 10h4v4" stroke="#fff" fill="none" /></Svg></StatusCell>
            <StatusCell $w={26}><Svg w={18} h={16}><circle cx="8" cy="9" r="6" fill="none" stroke="#ccc" /><path d="M3 12h8M7 13l9-11" stroke="#ccc" /></Svg></StatusCell>
            <StatusCell $w={15}><Caret $s={4} $c="#eee" /></StatusCell>
            <StatusCell $w={24}><Svg><path d="M2 2l12 12" stroke="#e05050" strokeWidth="1.2" /><path d="M8 1v14" stroke="#45c045" strokeWidth="1.2" /><circle cx="8" cy="8" r="1.500" fill="#ddd" /></Svg></StatusCell>
            <StatusCell $w={16}><Caret $s={4} $c="#eee" /></StatusCell>
            <StatusCell $w={22} $on><Svg><path d="M1 13h13M3 12l8-7" stroke="#fff" strokeWidth="1.2" /><circle cx="7" cy="9" r="1.500" fill="#fff" /></Svg></StatusCell>
            <StatusCell $w={26}><Svg w={18} h={18}><rect x="3" y="3" width="14" height="14" fill="none" stroke="#ccc" /><rect x="0" y="0" width="5" height="5" fill="#555" stroke="#e0a060" /></Svg></StatusCell>
            <StatusCell $w={14}><Caret $s={4} $c="#eee" /></StatusCell>
          </StatusGroup>
          <StatusGroup $w={66}>
            <StatusCell $w={20}><Svg><circle cx="8" cy="8" r="5" fill="none" stroke="#d8d8d8" strokeWidth="3.5" /><circle cx="8" cy="8" r="7" fill="none" stroke="#d8d8d8" strokeWidth="2" strokeDasharray="3 2.500" /></Svg></StatusCell>
            <StatusCell $w={20} $sep><Caret $s={4} $c="#eee" /></StatusCell>
            <StatusCell $w={22}><Svg><path d="M8 0v16M0 8h16" stroke="#ddd" strokeWidth="1.6" /></Svg></StatusCell>
          </StatusGroup>
          <StatusGroup $w={99}>
            <StatusCell $w={22}><Svg><path d="M1 2h6v6H1zM1 9h6v6H1zM8 9h7v6H8z" fill="#d6d6d6" /></Svg></StatusCell>
            <StatusCell $w={25}><Svg><path d="M1 3h5M3 1v5" stroke="#ddd" /><rect x="5" y="6" width="6" height="6" fill="#bbb" /><rect x="9" y="10" width="6" height="5" fill="#ddd" /></Svg></StatusCell>
            <StatusCell $w={24} $on><Svg><path d="M3 14V3c0-3 5-3 5 0v8c0 2-3 2-3 0V5" stroke="#fff" fill="none" /><rect x="9" y="9" width="6" height="6" fill="#fff" /></Svg></StatusCell>
            <StatusCell $w={24}><Svg><rect x="0" y="1" width="7" height="7" fill="none" stroke="#ccc" /><circle cx="12" cy="8" r="3" fill="none" stroke="#ccc" /><path d="M5 10l3 5H2z" fill="none" stroke="#ccc" /></Svg></StatusCell>
          </StatusGroup>
          <StatusGroup $w={24}><StatusCell $w={20}><Svg><rect x="1" y="2" width="12" height="10" fill="none" stroke="#ddd" /><circle cx="6" cy="7" r="2.500" fill="#ddd" /><rect x="9" y="9" width="6" height="6" fill="#f0c040" /></Svg></StatusCell></StatusGroup>
          <StatusGroup $w={25}><StatusCell $w={21}><Svg><path d="M0 3h16M0 8h16M0 13h16" stroke="#d8d8d8" strokeWidth="1.5" /></Svg></StatusCell></StatusGroup>
        </Status>
      </LayoutBar>

      <Taskbar>
        <StartBtn><Svg w={16} h={16}><path d="M0 2.300L6.500 1.400V7.500H0zM7.300 1.300L16 0V7.500H7.300zM0 8.300H6.500V14.600L0 13.700zM7.300 8.300H16V16L7.300 14.700z" fill="#fff" /></Svg></StartBtn>
        <TaskSearch>
          <CortanaRing />
          <SearchText>Escribe aquí para buscar</SearchText>
          <MicWrap><Svg w={12} h={18}><rect x="3" y="0" width="6" height="12" rx="2" fill="#333" /><path d="M1 8c0 6 10 6 10 0M6 14v3M3 17h6" stroke="#333" fill="none" /></Svg></MicWrap>
        </TaskSearch>
        <TaskSlot><Svg w={16} h={22}><path d="M0 1h12M0 21h12" stroke="#eee" /><rect x=".5" y="6.500" width="11" height="9" fill="none" stroke="#eee" /><path d="M15 2v2M15 7v8M15 18v2" stroke="#eee" strokeWidth="2" /></Svg></TaskSlot>
        <TaskSlot><Tile $bg="#8f0f10" $c="#fff">Fz</Tile></TaskSlot>
        <TaskSlot><Tile $bg="#0b2a4a" $c="#7ec4f5" $bd="1px solid #5a9fd8" $f={`700 13px/20px ${UI}`}>Ps</Tile></TaskSlot>
        <TaskSlot>
          <Svg w={24} h={24}><rect x="1" y="1" width="22" height="22" rx="3" fill="#eee" /><path d="M12 4L5 20h6z" fill="#2fa83a" /><path d="M12 4l8 14-8 2z" fill="#e53528" /><path d="M9 3l4-1 1 4z" fill="#f0a020" /></Svg>
        </TaskSlot>
        <TaskSlot $running><Svg w={24} h={26}><ellipse cx="12" cy="13" rx="10" ry="11" fill="none" stroke="#e0111b" strokeWidth="5" /></Svg></TaskSlot>
        <TaskSlot><Tile $bg="#fbe6c8" $c="#d08a2c" $f={`700 18px/22px ${UI}`}>I</Tile></TaskSlot>
        <TaskSlot $active $running>
          <Tile $bg="#f4e4e0" $c="#b5212a" $f={`700 18px/22px ${UI}`}>A</Tile>
        </TaskSlot>
        <Tray>
          <TrayIcons>
            <Svg w={14} h={10}><path d="M1 8l6-6 6 6" stroke="#eee" fill="none" strokeWidth="1.2" /></Svg>
            <Svg w={18} h={12}><rect x="4" y="2" width="13" height="8" fill="none" stroke="#eee" /><rect x="6" y="4" width="9" height="4" fill="#eee" /><path d="M0 3h4M0 8h4" stroke="#eee" /></Svg>
            <Svg w={14} h={14}><path d="M1 13a12 12 0 0 1 12-12M4 13a9 9 0 0 1 9-9M7 13a6 6 0 0 1 6-6" stroke="#aaa" fill="none" /><circle cx="12" cy="12" r="1.500" fill="#eee" /></Svg>
            <Svg w={16} h={14}><path d="M1 5h3l4-4v12l-4-4H1z" fill="none" stroke="#eee" /><path d="M10 4a4 4 0 0 1 0 6M12 2a7 7 0 0 1 0 10" stroke="#eee" fill="none" /></Svg>
          </TrayIcons>
          <TrayLang>ESP<br />ES</TrayLang>
          <TrayClock>22:35<br />13/03/2019</TrayClock>
          <TrayNote>
            <Svg w={16} h={16}><path d="M1 2h14v10H6l-2 3v-3H1z" fill="#fff" /><path d="M3 5h10M3 8h10" stroke="#333" /></Svg>
            <NoteBadge>1</NoteBadge>
          </TrayNote>
          <TrayEdge />
        </Tray>
      </Taskbar>

      <RedBox $x={827} $y={60} $w={65} $h={94} />
      <RedBox $x={1247} $y={63} $w={141} $h={40} />
      <RedBox $x={1206} $y={167} $w={64} $h={64} />
    </Root>
  );
}
